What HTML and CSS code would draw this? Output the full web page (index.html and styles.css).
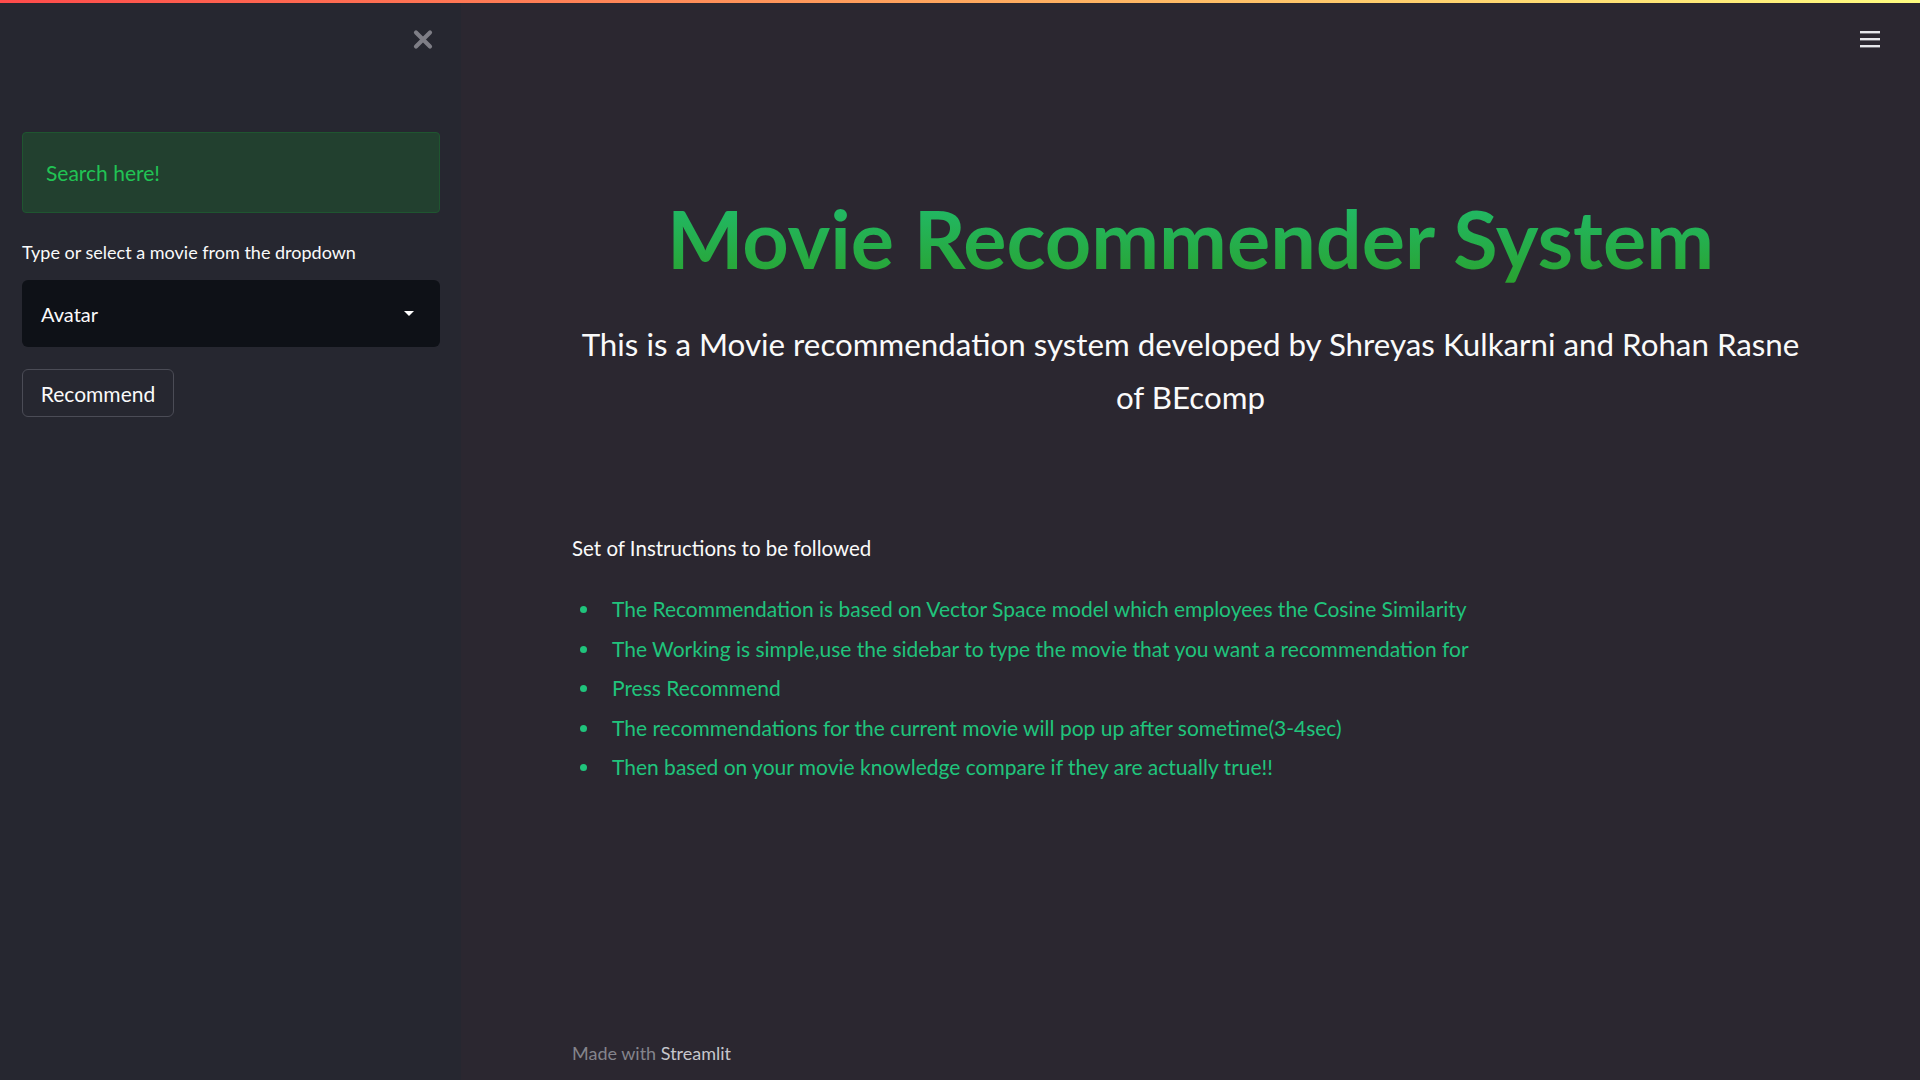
FILE: index.html
```html
<!DOCTYPE html>
<html lang="en">
<head>
<meta charset="utf-8">
<title>Movie Recommender System</title>
<link rel="stylesheet" href="styles.css">
</head>
<body>
<div class="topbar"></div>
<div class="app">
  <aside class="sidebar">
    <div class="sidebar-head">
      <button class="close-btn" aria-label="Close sidebar">
        <svg width="20" height="21" viewBox="0 0 20 21"><path d="M3 3.5 L17 17.5 M17 3.5 L3 17.5" stroke="#7e7e86" stroke-width="4.2" stroke-linecap="round"/></svg>
      </button>
    </div>
    <div class="search-box">Search here!</div>
    <label class="select-label">Type or select a movie from the dropdown</label>
    <div class="select">
      <span class="select-value">Avatar</span>
      <svg class="select-arrow" width="12" height="7" viewBox="0 0 12 7"><path d="M1 1 H11 L6 6 Z" fill="#ffffff"/></svg>
    </div>
    <button class="recommend-btn">Recommend</button>
  </aside>
  <main class="main">
    <div class="main-head">
      <button class="menu-btn" aria-label="Menu">
        <svg width="20" height="18" viewBox="0 0 20 18"><rect x="0" y="0" width="20" height="2.4" fill="#e6e6ea"/><rect x="0" y="7" width="20" height="2.4" fill="#e6e6ea"/><rect x="0" y="14" width="20" height="2.4" fill="#e6e6ea"/></svg>
      </button>
    </div>
    <div class="content">
      <h1 class="title">Movie Recommender System</h1>
      <p class="subtitle">This is a Movie recommendation system developed by Shreyas Kulkarni and Rohan Rasne of BEcomp</p>
      <h3 class="instr-head">Set of Instructions to be followed</h3>
      <ul class="instr-list">
        <li>The Recommendation is based on Vector Space model which employees the Cosine Similarity</li>
        <li>The Working is simple,use the sidebar to type the movie that you want a recommendation for</li>
        <li>Press Recommend</li>
        <li>The recommendations for the current movie will pop up after sometime(3-4sec)</li>
        <li>Then based on your movie knowledge compare if they are actually true!!</li>
      </ul>
    </div>
    <footer class="footer">Made with <span class="footer-brand">Streamlit</span></footer>
  </main>
</div>
</body>
</html>
```
FILE: styles.css
```css
* { box-sizing: border-box; }
html, body { margin: 0; padding: 0; }
body {
  width: 1920px;
  height: 1080px;
  overflow: hidden;
  background: #2b2730;
  font-family: Lato, "Open Sans", sans-serif;
  color: #fafafa;
  display: flex;
  flex-direction: column;
}
.topbar {
  height: 3px;
  flex: none;
  background: linear-gradient(90deg, #ff4b4b 0%, #ffa75e 50%, #fffd80 100%);
}
.app {
  flex: 1;
  display: flex;
}
.sidebar {
  width: 461px;
  flex: none;
  background: #262730;
  padding: 0 21px 0 22px;
  display: flex;
  flex-direction: column;
  align-items: flex-start;
}
.sidebar-head {
  align-self: stretch;
  display: flex;
  justify-content: flex-end;
  align-items: flex-start;
  padding-top: 26px;
  padding-right: 7px;
  height: 129px;
}
.close-btn, .menu-btn {
  background: none;
  border: none;
  padding: 0;
  margin: 0;
  display: block;
  line-height: 0;
}
.search-box {
  align-self: stretch;
  height: 81px;
  background: #22402f;
  border: 1px solid #1f5530;
  border-radius: 4px;
  color: #21c354;
  font-size: 21px;
  display: flex;
  align-items: center;
  padding-left: 23px;
}
.select-label {
  margin-top: 28px;
  font-size: 18px;
  line-height: 22px;
  color: #fafafa;
}
.select {
  align-self: stretch;
  margin-top: 17px;
  height: 67px;
  background: #0e1117;
  border-radius: 6px;
  display: flex;
  align-items: center;
  justify-content: space-between;
  padding: 0 25px 0 19px;
}
.select-value {
  font-size: 20px;
  color: #fafafa;
}
.recommend-btn {
  margin-top: 22px;
  width: 152px;
  height: 48px;
  background: #262730;
  border: 1px solid #4b4c56;
  border-radius: 6px;
  color: #fafafa;
  font-family: inherit;
  font-size: 21px;
  padding: 0;
}
.main {
  flex: 1;
  display: flex;
  flex-direction: column;
}
.main-head {
  display: flex;
  justify-content: flex-end;
  align-items: flex-start;
  padding: 28px 40px 0 0;
  height: 60px;
}
.content {
  width: 1237px;
  margin: 0 auto;
  flex: 1;
}
.title {
  margin: 125px 0 0;
  text-align: center;
  font-size: 81px;
  line-height: 100px;
  font-weight: 700;
  background: linear-gradient(180deg, #1fbe72 0%, #2aa12c 100%);
  -webkit-background-clip: text;
  background-clip: text;
  color: transparent;
}
.subtitle {
  margin: 30px 0 0;
  text-align: center;
  font-size: 31.3px;
  line-height: 53px;
  color: #fafafa;
}
.instr-head {
  margin: 111px 0 0;
  font-size: 20.5px;
  line-height: 26px;
  font-weight: 400;
  color: #fafafa;
}
.instr-list {
  margin: 35px 0 0;
  padding: 0 0 0 40px;
  list-style: none;
}
.instr-list li {
  position: relative;
  font-size: 21px;
  line-height: 26px;
  margin-bottom: 13.5px;
  color: #20c47c;
}
.instr-list li::before {
  content: "";
  position: absolute;
  left: -32px;
  top: 10px;
  width: 7px;
  height: 7px;
  border-radius: 50%;
  background: #20c47c;
}
.footer {
  width: 1237px;
  margin: 0 auto;
  padding-bottom: 16px;
  font-size: 18px;
  color: #84848c;
}
.footer-brand { color: #c6c6cc; }
```
